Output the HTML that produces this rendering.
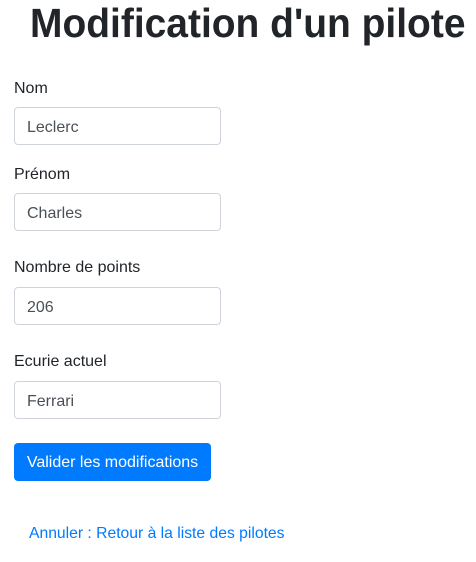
<!DOCTYPE html>
<html><head><meta charset="utf-8"><style>
body{margin:0;width:476px;height:562px;background:#fff;font-family:"Liberation Sans",sans-serif;color:#212529;position:relative;overflow:hidden}
h1{position:absolute;left:30px;top:-1px;margin:0;font-size:41px;font-weight:bold;white-space:nowrap;line-height:48px;transform:scaleX(0.95);transform-origin:0 0}
.l{position:absolute;left:14px;font-size:16px;line-height:20px}
.i{position:absolute;left:14px;width:205px;height:36px;border:1px solid #ced4da;border-radius:4px;font-size:16px;line-height:39px;box-sizing:content-box;color:#495057}
.i span{padding-left:12px}
.b{position:absolute;left:14px;top:443px;width:197px;height:38px;background:#007bff;border-radius:4px;color:#fff;font-size:16px;line-height:40px;text-align:center}
.k{position:absolute;left:29px;top:524px;font-size:15.7px;color:#007bff;line-height:20px}
</style></head><body>
<h1>Modification d'un pilote</h1>
<div class="l" style="top:79px">Nom</div>
<div class="i" style="top:107px"><span>Leclerc</span></div>
<div class="l" style="top:165px">Prénom</div>
<div class="i" style="top:193px"><span>Charles</span></div>
<div class="l" style="top:258px">Nombre de points</div>
<div class="i" style="top:287px"><span>206</span></div>
<div class="l" style="top:352px">Ecurie actuel</div>
<div class="i" style="top:381px"><span>Ferrari</span></div>
<div class="b">Valider les modifications</div>
<div class="k">Annuler : Retour à la liste des pilotes</div>
</body></html>
